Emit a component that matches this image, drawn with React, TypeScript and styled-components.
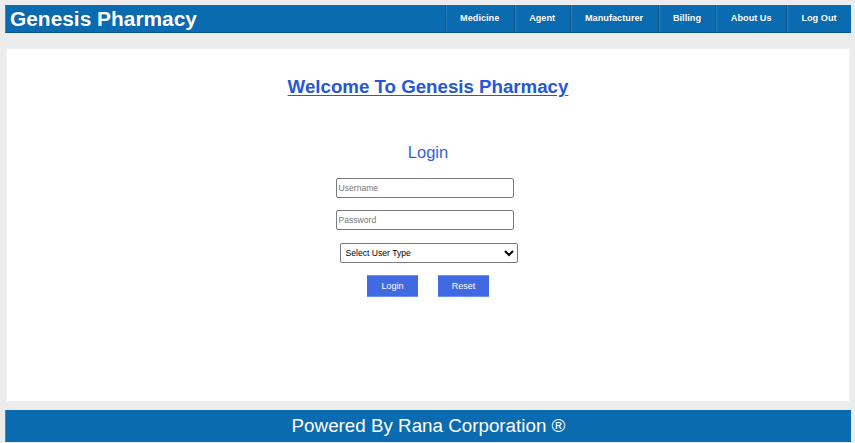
import React from "react";
import styled, { createGlobalStyle } from "styled-components";

const Global = createGlobalStyle`
  html, body { margin: 0; padding: 0; background: #ececec; }
  body { font-family: "Liberation Sans", Arial, sans-serif; }
  * { box-sizing: border-box; }
`;

const Page = styled.div`
  display: flex;
  flex-direction: column;
  padding: 5px 4px 1px 5px;
  height: 443px;
`;

const Header = styled.header`
  display: flex;
  align-items: stretch;
  justify-content: space-between;
  height: 28px;
  background: #0b6bb0;
  border-left: 1px solid #3a88c4;
  border-bottom: 1px solid #0a5590;
`;

const Brand = styled.div`
  color: #fff;
  font-weight: bold;
  font-size: 20.9px;
  line-height: 27px;
  padding-left: 4px;
  text-shadow: 0 0 1px rgba(0, 0, 0, 0.25);
`;

const Nav = styled.nav`
  display: flex;
  align-items: stretch;
`;

const NavItem = styled.a`
  display: flex;
  align-items: center;
  justify-content: center;
  padding: 0 14.4px 1px;
  color: #fff;
  font-weight: bold;
  font-size: 9.2px;
  text-decoration: none;
  border-left: 1px solid #08558c;
  box-shadow: inset 1px 0 0 #2a7fbf;
  text-shadow: 0 0 1px rgba(0, 0, 0, 0.3);
`;

const Content = styled.main`
  margin: 15px 1px 0 1px;
  height: 354px;
  background: #fff;
  border: 1px solid #f0f0f0;
  display: flex;
  flex-direction: column;
  align-items: center;
`;

const Welcome = styled.a`
  margin-top: 27px;
  color: #2557d6;
  font-weight: bold;
  font-size: 18.7px;
  line-height: 22px;
  text-decoration: underline;
  text-underline-offset: 2px;
`;

const LoginTitle = styled.h2`
  margin: 44px 0 0;
  color: #3464d8;
  font-weight: normal;
  font-size: 16.5px;
  line-height: 20px;
`;

const Form = styled.form`
  display: flex;
  flex-direction: column;
  align-items: center;
  margin-top: 16px;
`;

const Input = styled.input`
  width: 178px;
  height: 20px;
  margin-right: 7px;
  margin-bottom: 12px;
  padding: 0 2px;
  border: 1px solid #7a7a7a;
  border-radius: 2px;
  font-family: "Liberation Sans", Arial, sans-serif;
  font-size: 8.6px;
  color: #222;
  outline: none;
  &::placeholder { color: #777; }
`;

const Select = styled.select`
  width: 178px;
  height: 20px;
  margin: 1px 0 12px 1px;
  padding: 0 1px;
  border: 1px solid #7a7a7a;
  border-radius: 2px;
  font-family: "Liberation Sans", Arial, sans-serif;
  font-size: 8.6px;
  color: #000;
  background: #fff;
`;

const Buttons = styled.div`
  display: flex;
  gap: 20px;
`;

const Button = styled.button`
  width: 51px;
  height: 22px;
  border: none;
  border-top: 1px solid #6d8ff0;
  border-bottom: 1px solid #6d8ff0;
  background: #4169e1;
  color: #fff;
  font-family: "Liberation Sans", Arial, sans-serif;
  font-size: 9px;
  padding: 0;
`;

const Footer = styled.footer`
  margin-top: 8px;
  height: 32px;
  background: #0b6bb0;
  border-left: 1px solid #3a88c4;
  color: #fff;
  font-size: 18.8px;
  display: flex;
  align-items: center;
  justify-content: center;
  padding-bottom: 1px;
`;

const navItems = ["Medicine", "Agent", "Manufacturer", "Billing", "About Us", "Log Out"];

export default function App() {
  return (
    <>
      <Global />
      <Page>
        <Header>
          <Brand>Genesis Pharmacy</Brand>
          <Nav>
            {navItems.map((n) => (
              <NavItem key={n} href="#">{n}</NavItem>
            ))}
          </Nav>
        </Header>
        <Content>
          <Welcome href="#">Welcome To Genesis Pharmacy</Welcome>
          <LoginTitle>Login</LoginTitle>
          <Form onSubmit={(e) => e.preventDefault()}>
            <Input type="text" placeholder="Username" />
            <Input type="password" placeholder="Password" />
            <Select defaultValue="">
              <option value="">Select User Type</option>
              <option value="admin">Admin</option>
              <option value="user">User</option>
            </Select>
            <Buttons>
              <Button type="submit">Login</Button>
              <Button type="reset">Reset</Button>
            </Buttons>
          </Form>
        </Content>
        <Footer>Powered By Rana Corporation ®</Footer>
      </Page>
    </>
  );
}
